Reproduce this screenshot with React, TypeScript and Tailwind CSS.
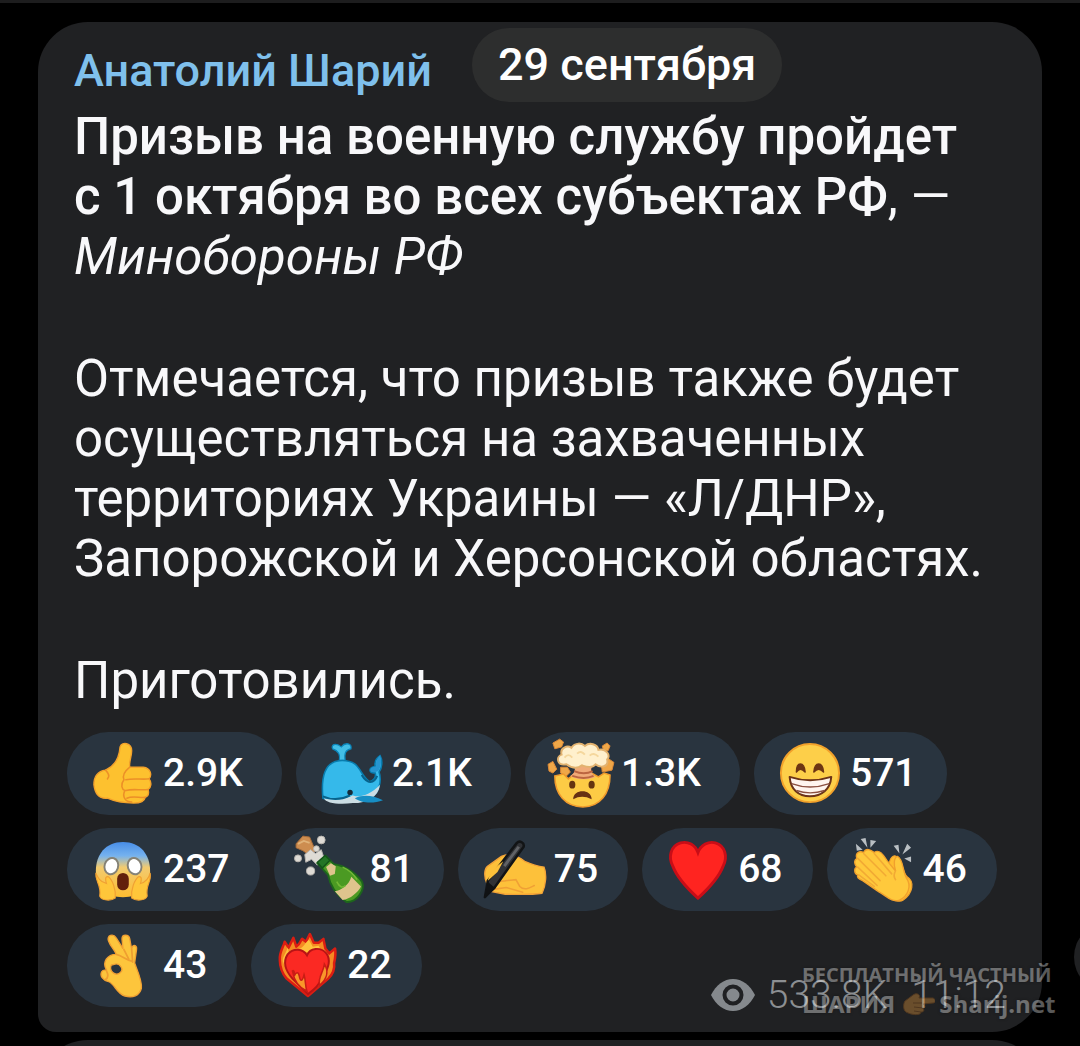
import type { ReactNode } from "react";

function Emoji({ children }: { children: ReactNode }) {
  return (
    <svg viewBox="0 0 64 64" className="size-[62px] shrink-0 overflow-visible" aria-hidden="true">
      {children}
    </svg>
  );
}

const skin = "#fdc12f";
const edge = "#f3a12b";

const ThumbsUp = () => (
  <Emoji>
    <path d="M30 4C32-2 42 0 42 8C42 14 39 20 40 25H54C62 26 63 33 60 37C63 41 62 46 59 48C60 52 59 55 56 56C55 61 50 62 44 62C36 62 26 61 17 57C8 58 4 52 3 43C3 34 8 29 15 28C24 24 29 17 30 4Z" fill={skin} stroke={edge} strokeWidth="1.4" />
    <path d="M15 28C19 32 19 35 17 37M40 25C35 29 32 33 34 38C30 43 32 48 35 49C32 55 35 61 42 61M36 38C44 36 52 38 60 37M36 49C43 47 51 49 59 48M37 57C43 54 51 57 56 56" fill="none" stroke="#ec8f27" strokeWidth="1.6" strokeLinecap="round" />
  </Emoji>
);

const Whale = () => (
  <Emoji>
    <path d="M20 18C21 12 19 8 13 6C11 2 16-1 22 4C26-1 33 0 32 6C26 7 25 11 26 18Z" fill="#43bfe7" stroke="#0b86bb" strokeWidth="1.3" />
    <path d="M3 57C1 36 4 18 23 18C42 18 40 32 51 40C56 39 58 35 57 31C51 31 50 27 54 25L57 24C56 19 59 15 62 13C65 18 64 26 61 30C64 39 61 52 52 57C38 61 12 61 3 57Z" fill="#35b9ea" stroke="#087cae" strokeWidth="1.6" />
    <path d="M57 30C52 31 50 28 54 25L58 24C57 19 59 16 62 13C64 18 63 25 60 29Z" fill="#2695cf" />
    <path d="M4 57C16 60 27 58 34 54C38 57 52 54 62 43C60 56 49 62 34 62C19 64 6 62 4 57Z" fill="#cbdde3" />
    <path d="M36 57C45 53 54 54 65 59C55 63 42 62 36 57Z" fill="#178ec4" />
    <path d="M3 55C14 60 25 57 31 54M43 33C49 43 56 42 59 34" fill="none" stroke="#07628b" strokeWidth="2" />
    <circle cx="31" cy="51" r="2.8" fill="#142a38" />
  </Emoji>
);

const MindBlown = () => (
  <Emoji>
    <g fill="#efa748" stroke="#dc8837" strokeWidth="1">
      <path d="M4 0L11-4L15-1L13 4L6 6Z" strokeLinejoin="round" />
      <path d="M55 3L60 0L63 3L61 8L56 7Z" />
      <path d="M-1 22L4 19L8 27L4 31L0 29Z" />
      <path d="M12 25L19 25L22 30L18 34L12 31Z" />
      <path d="M54 22L61 16L67 20L65 28L55 30Z" />
    </g>
    <path d="M6 34L15 32L20 37L27 31L36 34L44 31L51 35L57 31L63 33C63 52 53 66 35 66C17 66 6 53 6 34Z" fill="#fdcb45" stroke="#f09a2c" strokeWidth="1.6" />
    <path d="M25 22H46C42 27 43 31 48 35C40 39 28 38 22 34C27 31 28 27 25 22Z" fill="#f0aa78" />
    <path d="M26 29C33 32 39 32 45 29M24 34C33 37 39 37 46 34" stroke="#bc6540" strokeWidth="2" fill="none" />
    <path d="M18 22C8 24 7 14 13 12C11 5 19 2 23 5C27-1 34 0 37 3C42-1 50 1 51 7C59 5 64 13 60 17C62 25 53 26 48 22C44 27 37 24 34 23C28 28 22 25 18 22Z" fill="#fff0cd" stroke="#e2b26f" strokeWidth="2" />
    <path d="M16 15Q20 10 24 15M29 11Q33 7 37 12M42 13Q46 9 51 14" fill="none" stroke="#f5d79d" strokeWidth="2" />
    <ellipse cx="24" cy="43" rx="3.2" ry="4" fill="#653410" /><ellipse cx="44" cy="43" rx="3.2" ry="4" fill="#653410" />
    <path d="M25 58C25 47 44 47 44 58Q34 53 25 58Z" fill="#673013" />
  </Emoji>
);

const Grin = () => (
  <Emoji>
    <circle cx="33" cy="31" r="30" fill="#fdcf49" stroke="#f3a22b" strokeWidth="2" />
    <path d="M19 30C19 19 27 19 28 30Q23 24 19 30ZM37 30C38 19 46 19 47 30Q42 24 37 30Z" fill="#6d3513" stroke="#6d3513" strokeWidth="1.5" strokeLinejoin="round" />
    <path d="M12 35Q33 42 55 35C54 48 45 55 33 55S13 48 12 35Z" fill="#fff5ee" stroke="#6b3318" strokeWidth="2" strokeLinejoin="round" />
    <path d="M14 42Q33 49 53 42M19 49Q33 54 48 49" fill="none" stroke="#8c5141" strokeWidth="1.5" />
  </Emoji>
);

const Scream = () => (
  <Emoji>
    <defs>
      <linearGradient id="scared" x1="0" y1="0" x2="0" y2="1">
        <stop offset="0" stopColor="#478de8" /><stop offset=".25" stopColor="#75b2ef" />
        <stop offset=".46" stopColor="#f2cb70" /><stop offset="1" stopColor="#fdbd31" />
      </linearGradient>
    </defs>
    <path d="M33 3C51 3 61 16 61 33C61 51 50 60 33 60S5 51 5 33C5 16 15 3 33 3Z" fill="url(#scared)" />
    <ellipse cx="21" cy="28" rx="7" ry="8.5" fill="#fff" stroke="#858276" strokeWidth="2" transform="rotate(18 21 28)" />
    <ellipse cx="45" cy="28" rx="7" ry="8.5" fill="#fff" stroke="#858276" strokeWidth="2" transform="rotate(-18 45 28)" />
    <rect x="27" y="35" width="12" height="18" rx="6" fill="#62200c" />
    <path d="M5 35C4 44 11 47 9 59C11 64 21 64 25 61C26 52 22 42 18 39C14 38 15 43 16 46C9 44 7 40 5 35ZM61 35C63 44 56 47 58 59C56 64 46 64 42 61C41 52 45 42 49 39C53 38 52 43 51 46C58 44 60 40 61 35Z" fill="#ffc63a" stroke="#f0a033" strokeWidth="1.2" />
  </Emoji>
);

const Champagne = () => (
  <Emoji>
    <path d="M-2 5L5-3L12-2L18 12L12 17L5 12L-2 9Z" fill="#cd8d50" stroke="#a56b3a" strokeWidth="1" />
    <path d="M0 5L6 2L12 4" fill="none" stroke="#e0b379" strokeWidth="2" />
    <g fill="#dedbd5" stroke="#b9b5ae" strokeWidth="1">
      <circle cx="24" cy="1" r="4" /><circle cx="0" cy="20" r="3.6" /><circle cx="13" cy="33" r="4.2" />
      <circle cx="19" cy="10" r="3" /><path d="M7 16L13 11L18 15L24 11L27 20L20 27L14 21L8 24Z" />
    </g>
    <path d="M20 25L29 18L37 26C47 27 59 34 66 44C70 53 60 66 50 65C40 58 33 48 31 37Z" fill="#4b9a23" stroke="#1d661c" strokeWidth="2" />
    <path d="M20 24L28 17L33 22L25 30Z" fill="#247525" stroke="#135418" strokeWidth="1.5" />
    <path d="M29 29L34 25L39 28L38 36L33 38ZM38 54C45 53 53 47 55 39L65 49C62 55 54 62 46 63Z" fill="#dfc48d" />
    <path d="M46 29C53 32 58 37 61 42M40 44C43 50 46 51 49 48" fill="none" stroke="#73b936" strokeWidth="1.6" />
  </Emoji>
);

const Writing = () => (
  <Emoji>
    <path d="M5 46C2 39 2 31 6 28L20 18C28 14 35 16 44 23C51 26 57 28 64 29C67 36 66 48 62 56C48 58 34 57 24 57L9 54Z" fill="#fdc13a" stroke="#f3a338" strokeWidth="1.4" />
    <path d="M16 44L25 43M24 43L35 42L39 49C44 54 50 50 54 48M12 52L25 50L42 55" fill="none" stroke="#f0a035" strokeWidth="1.6" strokeLinecap="round" />
    <path d="M36 4C39 1 44 4 43 8L13 50L3 60L6 43Z" fill="#303236" stroke="#121416" strokeWidth="2.6" strokeLinejoin="round" />
    <path d="M38 8L23 28" stroke="#606266" strokeWidth="3" /><path d="M6 44L2 61L14 51Z" fill="#101214" />
    <path d="M6 43C8 34 14 29 22 23L16 34Z" fill="#fdc13a" />
  </Emoji>
);

const Heart = () => (
  <Emoji>
    <path d="M33 14C36 6 44 2 51 4C61 7 64 18 59 28C54 41 43 52 33 61C23 52 12 41 7 28C2 18 5 7 15 4C23 2 30 6 33 14Z" fill="#ff2420" stroke="#c90d17" strokeWidth="3" />
  </Emoji>
);

const Clap = () => (
  <Emoji>
    <path d="M40 31C38 24 42 15 47 18C54 21 52 33 58 39C66 44 64 56 54 63C48 67 40 60 35 58Z" fill="#ffbd30" stroke="#f1a12d" strokeWidth="1.2" />
    <path d="M6 20C4 14 9 12 13 14C16 8 21 12 24 14C29 10 33 16 37 22L46 33C44 27 44 19 48 18C54 21 53 32 57 40C63 48 59 59 50 63C42 66 37 59 28 54L12 43C7 41 6 39 7 37C3 36 3 30 6 29C3 25 3 22 6 20Z" fill="#ffc93c" stroke="#f1a12d" strokeWidth="1.4" />
    <path d="M7 20L30 43M13 15L36 38M24 15L42 36M7 29L27 48M8 37L24 49M46 33Q43 38 46 42" fill="none" stroke="#f2aa34" strokeWidth="1.6" strokeLinecap="round" />
    <path d="M5 5L12 11L6 12ZM10 0L15-1L17 9ZM20 1L26 2L20 9ZM44 7L49 6L50 15ZM58 5L62 9L53 16ZM62 18L62 24L55 20Z" fill="#b9bfc3" />
  </Emoji>
);

const OkHand = () => (
  <Emoji>
    <path fillRule="evenodd" d="M18 6C16 0 23-2 26 3L33 14L32 4C32-1 39-1 40 4L42 15C42 9 48 10 47 15L45 29C48 37 53 48 52 55C50 63 43 65 35 63C26 60 25 51 18 48C12 47 9 42 11 38C13 35 15 37 16 36C11 28 17 20 26 20C25 16 20 12 18 6ZM21 31C18 37 25 43 30 39C35 35 29 29 25 30Z" fill="#fdc53c" stroke="#f1a033" strokeWidth="1.4" />
    <path d="M26 20C32 21 36 26 42 27M34 15L39 25M42 15L43 28M16 37C18 41 18 44 15 46" fill="none" stroke="#ef9f30" strokeWidth="1.8" strokeLinecap="round" />
  </Emoji>
);

const FireHeart = () => (
  <Emoji>
    <path d="M5 26C4 18 9 12 10 7L14 13L19 3L22 12C27 8 27 4 28 4L32 7L36-1L40 8L45 8L50 4L52 14L56 19L62 14C63 20 62 25 61 29C62 36 59 41 55 45L34 63L12 45C7 39 5 33 5 26Z" fill="#f58a22" stroke="#dc1d12" strokeWidth="2.6" strokeLinejoin="round" />
    <path d="M8 27C8 22 12 18 13 13L15 20L11 34ZM24 15C30 13 31 8 35 5L39 12L45 11L48 16L34 18Z" fill="#ffc23d" />
    <path d="M33 21C36 13 47 12 53 19C59 27 53 38 49 44C46 51 41 56 34 61L29 56L24 51L18 45C11 37 8 28 13 20C19 13 29 14 33 21Z" fill="#fb2923" stroke="#b71415" strokeWidth="2" />
    <path d="M18 37C20 36 20 39 20 42C22 38 24 38 25 42C26 48 28 49 30 41C32 48 31 53 33 58C26 55 20 49 18 37ZM46 52C44 43 50 39 51 30C56 38 53 46 46 52Z" fill="#f9962a" stroke="#c91d15" strokeWidth="1.6" />
  </Emoji>
);

const compact = "";
const wide = "min-w-[215px]";

const reactions = [
  { name: "Палец вверх", Icon: ThumbsUp, count: "2.9K", size: wide },
  { name: "Кит", Icon: Whale, count: "2.1K", size: wide },
  { name: "Взрыв мозга", Icon: MindBlown, count: "1.3K", size: wide },
  { name: "Улыбка", Icon: Grin, count: "571", size: compact },
  { name: "Крик", Icon: Scream, count: "237", size: compact },
  { name: "Шампанское", Icon: Champagne, count: "81", size: compact },
  { name: "Пишущая рука", Icon: Writing, count: "75", size: compact },
  { name: "Сердце", Icon: Heart, count: "68", size: compact },
  { name: "Аплодисменты", Icon: Clap, count: "46", size: compact },
  { name: "Окей", Icon: OkHand, count: "43", size: compact },
  { name: "Горящее сердце", Icon: FireHeart, count: "22", size: compact },
];

function Watermark() {
  return (
    <div className="absolute right-[26px] bottom-[27px] w-[252px] font-['Open_Sans',sans-serif] font-bold whitespace-nowrap text-white opacity-35 [text-shadow:0_0_3px_#000]">
      <div className="text-[20px] leading-7">БЕСПЛАТНЫЙ ЧАСТНЫЙ</div>
      <div className="flex items-center gap-2 text-[24px] leading-[30px]">
        <span>ШАРИЯ</span>
        <svg viewBox="0 0 32 24" className="h-6 w-8 shrink-0" aria-hidden="true">
          <path d="M2 9L10 3C14 0 18 3 16 6L30 6C33 7 33 11 30 11L20 12C23 14 22 16 20 16C22 19 20 20 18 20C18 24 8 23 3 20C0 18 0 12 2 9Z" fill="#f3a23d" stroke="#a55e19" />
          <path d="M10 11L19 11M11 15L20 16M11 19L18 20" fill="none" stroke="#a55e19" />
        </svg>
        <span className="-ml-1">Sharij.net</span>
      </div>
    </div>
  );
}

export default function App() {
  return (
    <main className="relative min-h-screen overflow-hidden bg-black font-[Roboto,sans-serif]">
      <div className="h-[3px] bg-[#1d1d1e]" />
      <article className="mx-[38px] mt-[19px] rounded-[50px] rounded-bl-[18px] bg-[#202123] pt-[6px] pr-[36px] pb-[25px] pl-[29px]">
        <header className="flex items-start pl-[7px]">
          <a href="#author" className="w-[398px] pt-[13px] text-[45px] leading-[60px] font-medium whitespace-nowrap text-[#7fc0ec]">
            Анатолий Шарий
          </a>
          <time className="rounded-full bg-[#2d2e2e] px-[26px] text-[45px] leading-[74px] font-medium whitespace-nowrap text-white">
            29 сентября
          </time>
        </header>
        <div className="flex flex-col gap-[62px] pr-5 pl-[7px] text-[51px] leading-[60px] text-[#f8f8fa]">
          <p className="pt-[5px]">
            <strong className="font-medium">Призыв на военную службу пройдет с 1 октября во всех субъектах РФ</strong>, —<br />
            <em>Минобороны РФ</em>
          </p>
          <p>Отмечается, что призыв также будет осуществляться на захваченных территориях Украины — «Л/ДНР», Запорожской и Херсонской областях.</p>
          <p>Приготовились.</p>
        </div>
        <div className="mt-[21px] flex flex-wrap items-end gap-x-[14px] gap-y-[13px]">
          {reactions.map(({ name, Icon, count, size }) => (
            <button key={name} type="button" title={name} className={`flex h-[83px] items-center gap-[10px] rounded-full bg-[#29343f] pr-[30px] pl-6 text-[39px] font-medium text-white ${size}`}>
              <Icon />
              <span>{count}</span>
            </button>
          ))}
          <div className="ml-auto flex h-6 items-center text-[39px] font-light whitespace-nowrap text-[#8c8f92]">
            <svg viewBox="0 0 44 32" className="mr-3 h-8 w-11" aria-hidden="true">
              <path d="M0 16C5 6 13 0 22 0S39 6 44 16C39 26 31 32 22 32S5 26 0 16Z" fill="#85898d" />
              <circle cx="22" cy="16" r="8.5" fill="none" stroke="#202123" strokeWidth="4" />
            </svg>
            <span>533.8K</span>
            <time className="ml-6">11:12</time>
          </div>
        </div>
      </article>
      <div className="mx-[38px] mt-[8px] h-[6px] overflow-hidden">
        <div className="h-[100px] rounded-t-[50px] bg-[#202123]" />
      </div>
      <div className="absolute -right-[64px] bottom-[54px] size-[70px] rounded-full bg-[#202123]" />
      <Watermark />
    </main>
  );
}
